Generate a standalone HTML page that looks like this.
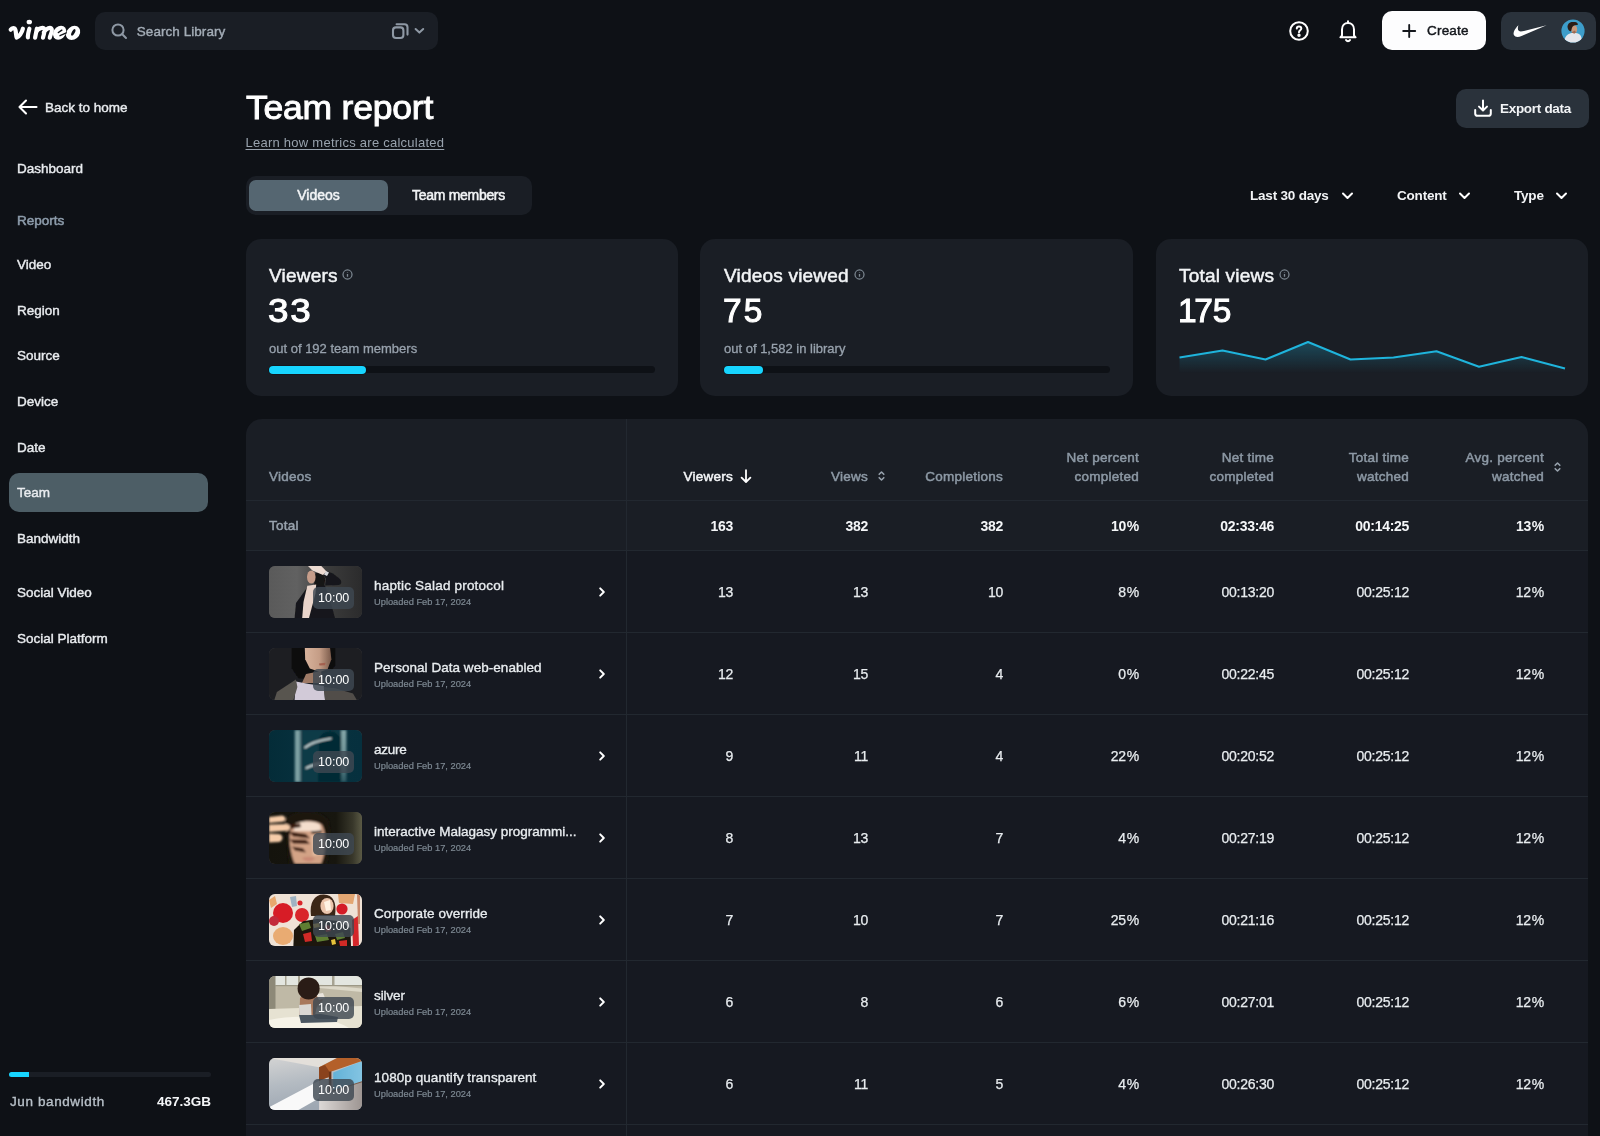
<!DOCTYPE html>
<html><head><meta charset="utf-8">
<style>
*{box-sizing:border-box;margin:0;padding:0}
html,body{width:1600px;height:1136px;overflow:hidden;background:#0e1116;font-family:"Liberation Sans",sans-serif;color:#eef1f4;-webkit-font-smoothing:antialiased}
.abs{position:absolute}
.med{font-weight:normal!important;-webkit-text-stroke:0.45px currentColor}
.sb{font-weight:normal!important;-webkit-text-stroke:0.6px currentColor}
.t{position:absolute;white-space:nowrap;line-height:1}
#search{left:95px;top:11.6px;width:342.8px;height:38.3px;border-radius:10px;background:#1a1e25}
#create{left:1382px;top:11px;width:104px;height:39px;border-radius:10px;background:#fdfdfe}
#acct{left:1501px;top:12px;width:95px;height:38px;border-radius:10px;background:#2a323b}
.nav{left:17px;font-size:13.5px;color:#e9ecef;-webkit-text-stroke:0.4px currentColor}
#teampill{left:9px;top:473px;width:198.6px;height:39px;border-radius:10px;background:#4d5e66}
#tabs{left:245.6px;top:176px;width:286.6px;height:39px;border-radius:10px;background:#1a1e25}
#tabact{left:249px;top:179.8px;width:139px;height:31.4px;border-radius:7px;background:#556671}
#export{left:1456px;top:89.2px;width:132.6px;height:38.7px;border-radius:10px;background:#2a323b}
.card{top:238.7px;width:432.6px;height:157.6px;border-radius:15px;background:#1a1e25}
.ctitle{font-size:19px;color:#f2f4f6;top:265.5px;letter-spacing:0.2px;-webkit-text-stroke:0.5px #f2f4f6}
.cnum{font-size:33.5px;color:#fff;top:294px;letter-spacing:2.5px;-webkit-text-stroke:1px #fff}
.csub{font-size:13px;color:#98a2ad;top:342px;-webkit-text-stroke:0.3px #98a2ad}
.track{top:366px;width:386px;height:7px;border-radius:4px;background:#0e1116}
.fill{top:365.5px;height:8px;border-radius:4px;background:#17d5ff;box-shadow:0 0 0 0.6px #0e1116}
#table{left:245.6px;top:418.8px;width:1342.9px;height:730px;border-radius:16px;background:#1a1e25}
.hl{left:245.6px;width:1342.9px;height:1px;background:#222830}
.th{font-size:13.5px;color:#8d99a5;text-align:right;letter-spacing:0.25px;-webkit-text-stroke:0.5px currentColor}
.num{font-size:14px;color:#e8ecef;text-align:right;letter-spacing:-0.25px;-webkit-text-stroke:0.25px #e8ecef;margin-top:-1px}
.tot{font-size:14px;color:#f4f6f8;font-weight:bold;text-align:right;letter-spacing:-0.3px;margin-top:0.3px}
.thumb{left:269px;width:93px;height:52px;border-radius:6px;overflow:hidden;background:#444}
.badge{left:313px;width:41px;height:22px;border-radius:5px;background:rgba(62,72,82,.82)}
.dur{font-size:12.5px;color:#fff;left:318px}
.vt{left:374px;font-size:13.5px;color:#e8ecef;-webkit-text-stroke:0.35px #e8ecef}
.vs{left:374px;font-size:9.3px;color:#7d8892;-webkit-text-stroke:0.2px #7d8892}
</style></head><body><div id="root" style="position:absolute;left:0;top:0;width:1600px;height:1136px;will-change:transform;overflow:hidden">
<!-- TOPBAR -->
<svg class="abs" style="left:0px;top:10px" width="100" height="40" viewBox="0 10 100 40"><g fill="none" stroke="#fff" stroke-width="4.2" stroke-linecap="round" stroke-linejoin="round">
<path d="M10.7 29.7 C12 27.7 14.6 27.5 15.4 29.9 C16.2 32.6 15.9 36 16.7 37.6 C18.6 37 22.2 32.6 22.9 28.7"/>
<path d="M29.4 28.7 C28.6 31.6 27.6 35 27.9 37.3"/>
<path d="M36.9 28.7 L35.1 37.6 M36 32.5 C38 28 43.5 26.7 44.6 29.5 C45.2 31.4 43.6 34.6 43 37.6 M43.8 32.5 C46 28 50.8 26.7 51.8 29.5 C52.4 31.4 50.4 34.8 49.8 37.6"/>
</g>
<ellipse cx="29.3" cy="22" rx="2.7" ry="2.35" fill="#fff"/>
<g transform="translate(59.6 32.8) skewX(-12)"><ellipse rx="6.5" ry="7" fill="#fff"/></g>
<g transform="translate(73.1 32.9) skewX(-12)"><ellipse rx="7" ry="7.1" fill="#fff"/></g>
<path d="M58.4 32.5 L61.8 30.2" stroke="#0e1116" stroke-width="1.5" stroke-linecap="round"/>
<path d="M60 35.7 L66.3 32.8" stroke="#0e1116" stroke-width="1.3" stroke-linecap="round"/>
<ellipse cx="73.3" cy="32.4" rx="1.5" ry="3.6" transform="rotate(28 73.3 32.4)" fill="#0e1116"/>
</svg>
<div id="search" class="abs"></div>
<svg class="abs" style="left:110px;top:22px" width="18" height="18" viewBox="0 0 18 18" fill="none" stroke="#8e98a4" stroke-width="2" stroke-linecap="round"><circle cx="8" cy="8" r="5.6"/><path d="M12.3 12.3 L16 16"/></svg>
<div class="t" style="left:136.8px;top:24.5px;font-size:13.5px;color:#a4adb7;-webkit-text-stroke:0.4px #a4adb7;letter-spacing:0.05px">Search Library</div>
<svg class="abs" style="left:388px;top:20px" width="40" height="22" viewBox="388 20 40 22" fill="none" stroke="#8e98a4" stroke-width="2.1" stroke-linecap="round" stroke-linejoin="round"><rect x="393" y="27.4" width="10.4" height="10.6" rx="3"/><path d="M396.6 24.2 H404.4 C406.4 24.2 407.5 25.3 407.5 27.3 V34.6"/><path d="M415.6 29 L419.4 32.6 L423.2 29" stroke-width="2"/></svg>
<svg class="abs" style="left:1288px;top:20px" width="22" height="22" viewBox="0 0 22 22" fill="none" stroke="#fff" stroke-width="2" stroke-linecap="round" stroke-linejoin="round"><circle cx="11" cy="11" r="8.8"/><path d="M8.8 8.6 C8.8 7.2 9.8 6.4 11 6.4 C12.3 6.4 13.3 7.3 13.3 8.5 C13.3 10.2 11 10.4 11 12.2"/><circle cx="11" cy="15.2" r="0.7" fill="#fff"/></svg>
<svg class="abs" style="left:1338px;top:19px" width="20" height="24" viewBox="0 0 20 24" fill="none" stroke="#fff" stroke-width="2" stroke-linecap="round" stroke-linejoin="round"><path d="M4 16.5 V10.5 C4 6.6 6.6 4 10 4 C13.4 4 16 6.6 16 10.5 V16.5 L17.6 18.3 H2.4 Z"/><path d="M8 21 C8.6 22 9.2 22.3 10 22.3 C10.8 22.3 11.4 22 12 21"/><path d="M10 2.3 V4"/></svg>
<div id="create" class="abs"></div>
<svg class="abs" style="left:1401px;top:23px" width="16" height="16" viewBox="0 0 16 16" fill="none" stroke="#14171c" stroke-width="1.9" stroke-linecap="round"><path d="M8.2 2 V14 M2.2 8 H14.2"/></svg>
<div class="t" style="left:1427px;top:24px;font-size:13.5px;color:#14171c;-webkit-text-stroke:0.45px #14171c;letter-spacing:0.2px">Create</div>
<div id="acct" class="abs"></div>
<svg class="abs" style="left:1512px;top:22px" width="36" height="18" viewBox="0 0 36 18"><path d="M34.6 3.2 L9.5 14 C6 15.6 3 15.2 1.9 13 C0.9 10.6 2.8 6.8 6.4 3.2 C5.6 5.6 5.6 7.8 6.8 8.8 C8 9.8 10 9.4 12 8.9 Z" fill="#fff"/></svg>
<svg class="abs" style="left:1561.1px;top:18.8px" width="24" height="24" viewBox="0 0 24 24"><defs><clipPath id="av"><circle cx="12" cy="12" r="11.6"/></clipPath><filter id="avb"><feGaussianBlur stdDeviation="0.35"/></filter></defs><g clip-path="url(#av)"><rect width="24" height="24" fill="#3d9dca"/><g filter="url(#avb)"><path d="M3 24 C3.4 17.5 6.5 15 9.5 14.2 L13 13.6 L17 14.6 C19.5 15.6 21 18 21 24 Z" fill="#e4e6ec"/><ellipse cx="13.2" cy="10.3" rx="2.9" ry="4.1" fill="#c9987c"/><path d="M10.2 13.4 L13.4 14.6 L15 13.6 L14 11.5 Z" fill="#9b6a52"/><path d="M6.6 8.6 C6 4 10 2.4 13 3 C16 3 17.4 4.6 16.6 6 C14 5.6 11.6 6.6 10.8 9.2 C10.4 10.8 10.4 12 9.6 12.4 C7.8 12 6.9 10.4 6.6 8.6 Z" fill="#2a1a14"/></g></g></svg>
<!-- SIDEBAR -->
<div id="teampill" class="abs"></div>
<svg class="abs" style="left:17px;top:98px" width="22" height="18" viewBox="0 0 22 18" fill="none" stroke="#fff" stroke-width="2.1" stroke-linecap="round" stroke-linejoin="round"><path d="M19.5 9 H2.5 M9 2.5 L2.5 9 L9 15.5"/></svg>
<div class="t nav" style="left:45px;top:101px">Back to home</div>
<div class="t nav" style="top:162px">Dashboard</div>
<div class="t nav" style="top:214px;color:#8d9cab;font-size:13.5px;-webkit-text-stroke:0.55px #8d9cab">Reports</div>
<div class="t nav" style="top:258px">Video</div>
<div class="t nav" style="top:304px">Region</div>
<div class="t nav" style="top:349px">Source</div>
<div class="t nav" style="top:395px">Device</div>
<div class="t nav" style="top:441px">Date</div>
<div class="t nav" style="top:486px">Team</div>
<div class="t nav" style="top:532px">Bandwidth</div>
<div class="t nav" style="top:586px">Social Video</div>
<div class="t nav" style="top:632px">Social Platform</div>
<div class="abs" style="left:9px;top:1072px;width:202px;height:5px;border-radius:3px;background:#1a1e25"></div>
<div class="abs" style="left:9px;top:1072px;width:20px;height:5px;border-radius:3px 0 0 3px;background:#17d5ff"></div>
<div class="t" style="left:10px;top:1094.7px;font-size:13.5px;color:#b8c0c8;letter-spacing:0.6px;-webkit-text-stroke:0.35px #b8c0c8">Jun bandwidth</div>
<div class="t" style="left:111px;width:100px;text-align:right;top:1094.7px;font-size:13.5px;color:#f4f6f8;font-weight:bold;letter-spacing:0px">467.3GB</div>
<!-- MAIN -->
<div class="t" id="title" style="left:245.6px;top:92.2px;font-size:32.6px;color:#fff;letter-spacing:-0.2px;-webkit-text-stroke:0.9px #fff;transform:scaleX(1.09);transform-origin:left center">Team report</div>
<div class="t" style="left:245.5px;top:136px;font-size:13px;letter-spacing:0.25px;color:#98a2ad;text-decoration:underline;text-underline-offset:2px">Learn how metrics are calculated</div>
<div id="tabs" class="abs"></div><div id="tabact" class="abs"></div>
<div class="t" style="left:249px;width:139px;text-align:center;top:188px;font-size:14px;color:#f2f4f6;-webkit-text-stroke:0.5px #f2f4f6;letter-spacing:0px">Videos</div>
<div class="t" style="left:388px;width:141px;text-align:center;top:188px;font-size:14px;color:#f2f4f6;-webkit-text-stroke:0.5px #f2f4f6;letter-spacing:-0.3px">Team members</div>
<div id="export" class="abs"></div>
<svg class="abs" style="left:1473px;top:98px" width="20" height="20" viewBox="0 0 20 20" fill="none" stroke="#fff" stroke-width="2" stroke-linecap="round" stroke-linejoin="round"><path d="M10 2.4 V12 M6 8.6 L10 12.4 L14 8.6"/><path d="M2.2 12 V15.4 C2.2 16.9 3.1 17.8 4.6 17.8 H15.4 C16.9 17.8 17.8 16.9 17.8 15.4 V12"/></svg>
<div class="t" style="left:1500px;top:102px;font-size:13.5px;font-weight:bold;color:#f2f4f6;letter-spacing:-0.3px">Export data</div>
<div class="t" style="left:1250px;top:189px;font-size:13.5px;font-weight:bold;color:#f2f4f6;letter-spacing:-0.2px">Last 30 days</div>
<svg class="abs chev" style="left:1341px;top:191px" width="13" height="10" viewBox="0 0 13 10" fill="none" stroke="#fff" stroke-width="2" stroke-linecap="round" stroke-linejoin="round"><path d="M2 2.5 L6.5 7 L11 2.5"/></svg>
<div class="t" style="left:1397px;top:189px;font-size:13.5px;font-weight:bold;color:#f2f4f6;letter-spacing:-0.2px">Content</div>
<svg class="abs chev" style="left:1458px;top:191px" width="13" height="10" viewBox="0 0 13 10" fill="none" stroke="#fff" stroke-width="2" stroke-linecap="round" stroke-linejoin="round"><path d="M2 2.5 L6.5 7 L11 2.5"/></svg>
<div class="t" style="left:1514px;top:189px;font-size:13.5px;font-weight:bold;color:#f2f4f6;letter-spacing:-0.2px">Type</div>
<svg class="abs chev" style="left:1555px;top:191px" width="13" height="10" viewBox="0 0 13 10" fill="none" stroke="#fff" stroke-width="2" stroke-linecap="round" stroke-linejoin="round"><path d="M2 2.5 L6.5 7 L11 2.5"/></svg>
<div class="abs card" style="left:245.6px"></div>
<div class="abs card" style="left:700.4px"></div>
<div class="abs card" style="left:1155.9px"></div>
<div class="t ctitle" style="left:269px">Viewers</div>
<div class="t ctitle" style="left:724px">Videos viewed</div>
<div class="t ctitle" style="left:1179px">Total views</div>
<svg class="abs" style="left:342.4px;top:269.1px" width="11" height="11" viewBox="0 0 11 11" fill="none" stroke="#7d8892" stroke-width="1.25"><circle cx="5.5" cy="5.5" r="4.5"/><path d="M5.5 5 V7.7 M5.5 3.2 V3.8" stroke-width="1.3"/></svg>
<svg class="abs" style="left:854.4px;top:269.1px" width="11" height="11" viewBox="0 0 11 11" fill="none" stroke="#7d8892" stroke-width="1.25"><circle cx="5.5" cy="5.5" r="4.5"/><path d="M5.5 5 V7.7 M5.5 3.2 V3.8" stroke-width="1.3"/></svg>
<svg class="abs" style="left:1279.4px;top:269.1px" width="11" height="11" viewBox="0 0 11 11" fill="none" stroke="#7d8892" stroke-width="1.25"><circle cx="5.5" cy="5.5" r="4.5"/><path d="M5.5 5 V7.7 M5.5 3.2 V3.8" stroke-width="1.3"/></svg>
<div class="t cnum" style="left:268px;letter-spacing:1.5px;transform:scaleX(1.1);transform-origin:left center">33</div>
<div class="t cnum" style="left:723px;letter-spacing:2px">75</div>
<div class="t cnum" style="left:1178px;letter-spacing:0"><span style="margin-right:-2.5px">1</span>75</div>
<div class="t csub" style="left:269px">out of 192 team members</div>
<div class="t csub" style="left:724px">out of 1,582 in library</div>
<div class="abs track" style="left:269px"></div><div class="abs fill" style="left:268.6px;width:97px"></div>
<div class="abs track" style="left:724px"></div><div class="abs fill" style="left:723.6px;width:39.6px"></div>
<svg class="abs" style="left:1156px;top:239px" width="432" height="157" viewBox="1156 239 432 157"><defs><linearGradient id="sg" x1="0" y1="0" x2="0" y2="1"><stop offset="0" stop-color="#1ea6cc" stop-opacity=".32"/><stop offset="1" stop-color="#1ea6cc" stop-opacity="0"/></linearGradient></defs>
<path d="M1179.5 357.5 L1222.5 350.5 L1265.5 359.5 L1308 342 L1350.5 359.5 L1393.5 357.5 L1436.5 351.3 L1479 366.8 L1521.5 357 L1565 368.5 V373 H1179.5 Z" fill="url(#sg)"/>
<path d="M1179.5 357.5 L1222.5 350.5 L1265.5 359.5 L1308 342 L1350.5 359.5 L1393.5 357.5 L1436.5 351.3 L1479 366.8 L1521.5 357 L1565 368.5" fill="none" stroke="#1fb4dc" stroke-width="2" stroke-linejoin="round"/></svg>
<div id="table" class="abs"></div>
<div class="abs" style="left:245.6px;top:550.5px;width:1342.9px;height:600px;background:#161921"></div>
<!-- TABLE -->
<div class="abs hl" style="top:500px"></div>
<div class="abs hl" style="top:550px"></div>
<div class="abs hl" style="top:632px"></div>
<div class="abs hl" style="top:714px"></div>
<div class="abs hl" style="top:796px"></div>
<div class="abs hl" style="top:878px"></div>
<div class="abs hl" style="top:960px"></div>
<div class="abs hl" style="top:1042px"></div>
<div class="abs hl" style="top:1124px"></div>
<div class="abs" style="left:626px;top:419px;width:1px;height:720px;background:#222830"></div>
<div class="t th" style="left:269px;top:470px;text-align:left">Videos</div>
<div class="t th" style="left:573px;width:160px;top:470px;color:#f4f6f8">Viewers</div>
<svg class="abs" style="left:739px;top:468px" width="14" height="16" viewBox="0 0 14 16" fill="none" stroke="#fff" stroke-width="1.8" stroke-linecap="round" stroke-linejoin="round"><path d="M7 2.2 V13.8 M2.6 9.6 L7 14 L11.4 9.6"/></svg>
<div class="t th" style="left:708px;width:160px;top:470px;">Views</div>
<svg class="abs" style="left:877px;top:470px" width="9" height="12" viewBox="0 0 9 12" fill="none" stroke="#98a2ad" stroke-width="1.6" stroke-linecap="round" stroke-linejoin="round"><path d="M2.2 4.3 L4.5 2 L6.8 4.3 M2.2 7.7 L4.5 10 L6.8 7.7"/></svg>
<div class="t th" style="left:843px;width:160px;top:470px;">Completions</div>
<div class="t th" style="left:979px;width:160px;top:451px;">Net percent</div>
<div class="t th" style="left:979px;width:160px;top:470px;">completed</div>
<div class="t th" style="left:1114px;width:160px;top:451px;">Net time</div>
<div class="t th" style="left:1114px;width:160px;top:470px;">completed</div>
<div class="t th" style="left:1249px;width:160px;top:451px;">Total time</div>
<div class="t th" style="left:1249px;width:160px;top:470px;">watched</div>
<div class="t th" style="left:1384px;width:160px;top:451px;">Avg. percent</div>
<div class="t th" style="left:1384px;width:160px;top:470px;">watched</div>
<svg class="abs" style="left:1553px;top:461px" width="9" height="12" viewBox="0 0 9 12" fill="none" stroke="#98a2ad" stroke-width="1.6" stroke-linecap="round" stroke-linejoin="round"><path d="M2.2 4.3 L4.5 2 L6.8 4.3 M2.2 7.7 L4.5 10 L6.8 7.7"/></svg>
<div class="t th" style="left:269px;top:519px;text-align:left;color:#98a2ad">Total</div>
<div class="t tot" style="left:573px;width:160px;top:519px;">163</div>
<div class="t tot" style="left:708px;width:160px;top:519px;">382</div>
<div class="t tot" style="left:843px;width:160px;top:519px;">382</div>
<div class="t tot" style="left:979px;width:160px;top:519px;">10&#8202;%</div>
<div class="t tot" style="left:1114px;width:160px;top:519px;">02:33:46</div>
<div class="t tot" style="left:1249px;width:160px;top:519px;">00:14:25</div>
<div class="t tot" style="left:1384px;width:160px;top:519px;">13&#8202;%</div>
<div class="abs thumb" style="top:566px" id="th0"><svg width="93" height="52" viewBox="0 0 93 52" style="display:block"><defs><filter id="b1_0" x="-10%" y="-10%" width="120%" height="120%"><feGaussianBlur stdDeviation="0.7"/></filter><linearGradient id="g0"><stop offset="0" stop-color="#5a5a5a"/><stop offset=".3" stop-color="#616161"/><stop offset=".62" stop-color="#3c3c3c"/><stop offset="1" stop-color="#2b2b2c"/></linearGradient></defs><rect width="93" height="52" fill="url(#g0)"/>
<g filter="url(#b1_0)">
<path d="M46 8 C50 5 56 8 56 14 L55 22 L45 21 Z" fill="#191313"/>
<path d="M25.6 52 L27 37 L36 24.5 L39 19.7 L49 19.7 L70 19 C73 18 73 15.5 71 13 L64 7.5 L56 4.4 L54 8 L57 13 L56 20 L60 30 L66 52 Z" fill="#17181b"/>
<path d="M38.3 19.7 L47.2 18.5 L46.5 27.3 L40 52 L33.2 52 L34.5 36 Z" fill="#e9d4ca"/>
<ellipse cx="42.3" cy="11" rx="4.3" ry="6.6" fill="#c69d8a"/>
<path d="M39 0 L52.3 0 L57.6 5.4 L54 9 L43.4 4.6 Z" fill="#ecdad1"/>
<path d="M57 5 L60 6.5 L58 10 L55 8.5 Z" fill="#d8d8dc"/>
</g></svg></div>
<div class="abs badge" style="top:587px"></div><div class="t dur" style="top:592px">10:00</div>
<div class="t vt" style="top:579px;letter-spacing:0.19px">haptic Salad protocol</div><div class="t vs" style="top:598px">Uploaded Feb 17, 2024</div>
<svg class="abs" style="left:597px;top:586px" width="10" height="12" viewBox="0 0 10 12" fill="none" stroke="#fff" stroke-width="2" stroke-linecap="round" stroke-linejoin="round"><path d="M3.2 2.4 L6.8 6 L3.2 9.6"/></svg>
<div class="t num" style="left:573px;width:160px;top:586px;">13</div>
<div class="t num" style="left:708px;width:160px;top:586px;">13</div>
<div class="t num" style="left:843px;width:160px;top:586px;">10</div>
<div class="t num" style="left:979px;width:160px;top:586px;">8&#8202;%</div>
<div class="t num" style="left:1114px;width:160px;top:586px;">00:13:20</div>
<div class="t num" style="left:1249px;width:160px;top:586px;">00:25:12</div>
<div class="t num" style="left:1384px;width:160px;top:586px;">12&#8202;%</div>
<div class="abs thumb" style="top:648px" id="th1"><svg width="93" height="52" viewBox="0 0 93 52" style="display:block"><defs><filter id="b1_1" x="-10%" y="-10%" width="120%" height="120%"><feGaussianBlur stdDeviation="0.7"/></filter><linearGradient id="f1"><stop offset="0" stop-color="#d8b39c"/><stop offset=".55" stop-color="#c59d86"/><stop offset="1" stop-color="#7a5a4a"/></linearGradient></defs><rect width="93" height="52" fill="#1d1e22"/>
<g filter="url(#b1_1)">
<path d="M22.4 0 L66.2 0 L66.2 17.5 L62.4 23 L37 30.5 L29.4 30.2 L22.4 20 Z" fill="#0c0c0e"/>
<path d="M37 26 L52 23 L54 35 L33 35 Z" fill="#9f7a66"/>
<path d="M35.8 0 L61.1 0 L62.4 11.2 L58.6 21.3 L51 24 L40.8 20.5 L36.2 11.2 Z" fill="url(#f1)"/>
<path d="M50 15.5 L56.5 14.8 L56 17.2 L50.5 17.4 Z" fill="#a3604f"/>
<path d="M26.9 33.5 L40 36 L54.8 38 L56 52 L25.6 52 Z" fill="#d2cad8"/>
<path d="M5.3 52 L7.9 44 L26.9 31.5 L28.4 39 L24.4 52 Z" fill="#58544f"/>
<path d="M54.8 39 L66.2 40.3 L84 45.4 L87.8 52 L56 52 Z" fill="#514d49"/>
</g></svg></div>
<div class="abs badge" style="top:669px"></div><div class="t dur" style="top:674px">10:00</div>
<div class="t vt" style="top:661px;letter-spacing:0.04px">Personal Data web-enabled</div><div class="t vs" style="top:680px">Uploaded Feb 17, 2024</div>
<svg class="abs" style="left:597px;top:668px" width="10" height="12" viewBox="0 0 10 12" fill="none" stroke="#fff" stroke-width="2" stroke-linecap="round" stroke-linejoin="round"><path d="M3.2 2.4 L6.8 6 L3.2 9.6"/></svg>
<div class="t num" style="left:573px;width:160px;top:668px;">12</div>
<div class="t num" style="left:708px;width:160px;top:668px;">15</div>
<div class="t num" style="left:843px;width:160px;top:668px;">4</div>
<div class="t num" style="left:979px;width:160px;top:668px;">0&#8202;%</div>
<div class="t num" style="left:1114px;width:160px;top:668px;">00:22:45</div>
<div class="t num" style="left:1249px;width:160px;top:668px;">00:25:12</div>
<div class="t num" style="left:1384px;width:160px;top:668px;">12&#8202;%</div>
<div class="abs thumb" style="top:730px" id="th2"><svg width="93" height="52" viewBox="0 0 93 52" style="display:block"><defs><filter id="b1_2" x="-10%" y="-10%" width="120%" height="120%"><feGaussianBlur stdDeviation="0.8"/></filter><linearGradient id="g2"><stop offset="0" stop-color="#042c38"/><stop offset=".5" stop-color="#08323f"/><stop offset="1" stop-color="#06303e"/></linearGradient><linearGradient id="r2" x2="0" y2="1"><stop offset="0" stop-color="#86a8aa"/><stop offset=".6" stop-color="#6a8e92"/><stop offset="1" stop-color="#2a5660"/></linearGradient></defs><rect width="93" height="52" fill="url(#g2)"/>
<g filter="url(#b1_2)">
<rect x="32" y="0" width="41" height="52" fill="#0b3b47"/>
<path d="M49 52 L50 10 C51 2 60 0 66 2 L72 8 L72 52 Z" fill="#062a35"/>
<rect x="25.8" y="0" width="5.6" height="52" fill="#7c9fa2"/>
<rect x="72.2" y="0" width="5.2" height="52" fill="url(#r2)"/>
<path d="M36 17.6 C42 12 52 10 62 8.4" stroke="#dfeaea" stroke-width="1.5" fill="none" stroke-linecap="round"/>
<path d="M37.2 38.2 C41 35.6 46 34.5 51 33.4" stroke="#dfeaea" stroke-width="1.5" fill="none" stroke-linecap="round"/>
</g></svg></div>
<div class="abs badge" style="top:751px"></div><div class="t dur" style="top:756px">10:00</div>
<div class="t vt" style="top:743px;letter-spacing:-0.25px">azure</div><div class="t vs" style="top:762px">Uploaded Feb 17, 2024</div>
<svg class="abs" style="left:597px;top:750px" width="10" height="12" viewBox="0 0 10 12" fill="none" stroke="#fff" stroke-width="2" stroke-linecap="round" stroke-linejoin="round"><path d="M3.2 2.4 L6.8 6 L3.2 9.6"/></svg>
<div class="t num" style="left:573px;width:160px;top:750px;">9</div>
<div class="t num" style="left:708px;width:160px;top:750px;">11</div>
<div class="t num" style="left:843px;width:160px;top:750px;">4</div>
<div class="t num" style="left:979px;width:160px;top:750px;">22&#8202;%</div>
<div class="t num" style="left:1114px;width:160px;top:750px;">00:20:52</div>
<div class="t num" style="left:1249px;width:160px;top:750px;">00:25:12</div>
<div class="t num" style="left:1384px;width:160px;top:750px;">12&#8202;%</div>
<div class="abs thumb" style="top:812px" id="th3"><svg width="93" height="52" viewBox="0 0 93 52" style="display:block"><defs><filter id="b1_3" x="-10%" y="-10%" width="120%" height="120%"><feGaussianBlur stdDeviation="0.8"/></filter><linearGradient id="g3"><stop offset="0" stop-color="#14130d"/><stop offset=".72" stop-color="#17160f"/><stop offset=".9" stop-color="#38372a"/><stop offset="1" stop-color="#5b5a45"/></linearGradient></defs><rect width="93" height="52" fill="url(#g3)"/>
<g filter="url(#b1_3)">
<path d="M16 9 C20 -3 55 -4 60 10 L62 30 L58 52 L20 52 Z" fill="#1b1710"/>
<path d="M22 16 C26 8 48 7 53 13 C57 20 58 38 52 52 L26 52 C21 42 19 24 22 16 Z" fill="#d3a386"/>
<path d="M25 13 C30 8.6 45 8.2 51 12.4 L52 19 L25 19 Z" fill="#f4decd"/>
<path d="M42 23 L54 22 L54 42 L44 44 Z" fill="#e5bca0"/>
<path d="M20 13 L31 11.6 L32 15 L21 17 Z M20 19.6 L37 22 L41 26.4 L24 24.6 Z M21 27.4 L37 27.8 L41 32 L24 31.6 Z M23 34.4 L34 36.2 L37 40.4 L26 38.4 Z" fill="#3a1b10"/>
<path d="M42 19.2 L53 18.4 L53 21 L43 21.8 Z" fill="#2a1a12"/>
<path d="M33 46 C37 44.4 42 44.4 46 46 C44 50.4 36 50.8 33 46 Z" fill="#c98a76"/>
<path d="M0 5 L13 3.6 C17.4 4.2 17.4 8.8 14 9.8 L0 11 Z M0 12.6 L17 12 C22.4 12.6 22.4 17.8 18 18.8 L0 20 Z M0 21.6 L10 22 C15 23 14.4 29 10 30 L0 30.6 Z" fill="#f6cca9"/>
</g></svg></div>
<div class="abs badge" style="top:833px"></div><div class="t dur" style="top:838px">10:00</div>
<div class="t vt" style="top:825px;letter-spacing:0.0px">interactive Malagasy programmi...</div><div class="t vs" style="top:844px">Uploaded Feb 17, 2024</div>
<svg class="abs" style="left:597px;top:832px" width="10" height="12" viewBox="0 0 10 12" fill="none" stroke="#fff" stroke-width="2" stroke-linecap="round" stroke-linejoin="round"><path d="M3.2 2.4 L6.8 6 L3.2 9.6"/></svg>
<div class="t num" style="left:573px;width:160px;top:832px;">8</div>
<div class="t num" style="left:708px;width:160px;top:832px;">13</div>
<div class="t num" style="left:843px;width:160px;top:832px;">7</div>
<div class="t num" style="left:979px;width:160px;top:832px;">4&#8202;%</div>
<div class="t num" style="left:1114px;width:160px;top:832px;">00:27:19</div>
<div class="t num" style="left:1249px;width:160px;top:832px;">00:25:12</div>
<div class="t num" style="left:1384px;width:160px;top:832px;">12&#8202;%</div>
<div class="abs thumb" style="top:894px" id="th4"><svg width="93" height="52" viewBox="0 0 93 52" style="display:block"><defs><filter id="b1_4" x="-10%" y="-10%" width="120%" height="120%"><feGaussianBlur stdDeviation="0.7"/></filter></defs><rect width="93" height="52" fill="#efe2d6"/>
<g filter="url(#b1_4)">
<path d="M69 0 L86 0 L84 10 L70 9 Z" fill="#e3a672"/>
<path d="M0 6 L6 2 L8 10 L2 14 Z" fill="#e8a86e"/>
<circle cx="14" cy="19" r="10" fill="#d71e26"/><circle cx="5" cy="27" r="5" fill="#c22a3a"/>
<circle cx="33" cy="21" r="7" fill="#d9262b"/><circle cx="31" cy="9" r="2.5" fill="#d9262b"/>
<path d="M21 3 L27 2 L28 12 L23 13 Z" fill="#9fb3c2"/>
<circle cx="73" cy="15" r="5.6" fill="#d41f27"/>
<path d="M83 26 L89 22 L90 52 L84 52 Z" fill="#d5252c"/>
<path d="M88 0 L91 0 L91 30 L89 30 Z" fill="#c9886a"/>
<ellipse cx="14" cy="42" rx="10" ry="9" fill="#e9ab72"/>
<path d="M42 22 C40 8 46 0 55 0.5 C64 1 68 8 66 22 Z" fill="#3b2518"/>
<ellipse cx="58" cy="12" rx="6.6" ry="8" fill="#ecc6ad"/>
<path d="M55 8 L61 6 L62 16 L57 17 Z" fill="#fff3e4"/>
<path d="M24.4 52 L25 36 L34 27.3 L48 25 L70 27 L81.4 34 L82 52 Z" fill="#1a130f"/>
<path d="M30 30 L40 28 L42 34 L33 37 Z M46 42 L58 40 L60 46 L48 48 Z M66 40 L74 38 L76 44 L68 46 Z" fill="#5e7e30"/>
<path d="M34 40 L42 38 L43 47 L36 48 Z M56 32 L60 31 L62 37 L57 38 Z M70 47 L78 46 L78 52 L71 52 Z" fill="#d02a26"/>
<path d="M44 30 L50 29 L51 33 L45 34 Z M62 46 L66 45 L67 50 L63 51 Z" fill="#e6c23a"/>
</g></svg></div>
<div class="abs badge" style="top:915px"></div><div class="t dur" style="top:920px">10:00</div>
<div class="t vt" style="top:907px;letter-spacing:0.06px">Corporate override</div><div class="t vs" style="top:926px">Uploaded Feb 17, 2024</div>
<svg class="abs" style="left:597px;top:914px" width="10" height="12" viewBox="0 0 10 12" fill="none" stroke="#fff" stroke-width="2" stroke-linecap="round" stroke-linejoin="round"><path d="M3.2 2.4 L6.8 6 L3.2 9.6"/></svg>
<div class="t num" style="left:573px;width:160px;top:914px;">7</div>
<div class="t num" style="left:708px;width:160px;top:914px;">10</div>
<div class="t num" style="left:843px;width:160px;top:914px;">7</div>
<div class="t num" style="left:979px;width:160px;top:914px;">25&#8202;%</div>
<div class="t num" style="left:1114px;width:160px;top:914px;">00:21:16</div>
<div class="t num" style="left:1249px;width:160px;top:914px;">00:25:12</div>
<div class="t num" style="left:1384px;width:160px;top:914px;">12&#8202;%</div>
<div class="abs thumb" style="top:976px" id="th5"><svg width="93" height="52" viewBox="0 0 93 52" style="display:block"><defs><filter id="b1_5" x="-10%" y="-10%" width="120%" height="120%"><feGaussianBlur stdDeviation="0.7"/></filter></defs><rect width="93" height="52" fill="#bfb9a6"/>
<g filter="url(#b1_5)">
<rect x="6" y="0" width="87" height="9" fill="#e3e6e0"/>
<rect x="0" y="0" width="6.5" height="34" fill="#8d8978"/>
<path d="M16 0 H17.5 V9 H16 Z M29 0 H31 V9 H29 Z M63 0 H65.5 V9 H63 Z" fill="#a7a392"/>
<path d="M50 8.5 L93 12.5 L93 16 L50 12 Z" fill="#dcd8c8"/>
<rect x="6" y="9" width="87" height="1.2" fill="#9c9886"/>
<path d="M0 33 L93 30 L93 52 L0 52 Z" fill="#e6e2d2"/>
<path d="M0 44 C30 38 60 40 80 52 L0 52 Z" fill="#f6f3e8"/>
<path d="M30 39 L52 38 L69 41 L68 46 L32 47 Z" fill="#4b5661"/>
<path d="M31 22 C34 18 44 17 50 20 L54 24 L48 30 L46 39 L30.5 39 Z" fill="#a8785b"/>
<path d="M30 29 L42 28 L42.5 39 L30.5 39 Z" fill="#dad7d3"/>
<path d="M47 18 L54 17 L56 22 L50 24 Z" fill="#e9e4dc"/>
<circle cx="39.6" cy="12.4" r="11" fill="#2a1c14"/>
</g></svg></div>
<div class="abs badge" style="top:997px"></div><div class="t dur" style="top:1002px">10:00</div>
<div class="t vt" style="top:989px;letter-spacing:-0.1px">silver</div><div class="t vs" style="top:1008px">Uploaded Feb 17, 2024</div>
<svg class="abs" style="left:597px;top:996px" width="10" height="12" viewBox="0 0 10 12" fill="none" stroke="#fff" stroke-width="2" stroke-linecap="round" stroke-linejoin="round"><path d="M3.2 2.4 L6.8 6 L3.2 9.6"/></svg>
<div class="t num" style="left:573px;width:160px;top:996px;">6</div>
<div class="t num" style="left:708px;width:160px;top:996px;">8</div>
<div class="t num" style="left:843px;width:160px;top:996px;">6</div>
<div class="t num" style="left:979px;width:160px;top:996px;">6&#8202;%</div>
<div class="t num" style="left:1114px;width:160px;top:996px;">00:27:01</div>
<div class="t num" style="left:1249px;width:160px;top:996px;">00:25:12</div>
<div class="t num" style="left:1384px;width:160px;top:996px;">12&#8202;%</div>
<div class="abs thumb" style="top:1058px" id="th6"><svg width="93" height="52" viewBox="0 0 93 52" style="display:block"><defs><filter id="b1_6" x="-10%" y="-10%" width="120%" height="120%"><feGaussianBlur stdDeviation="0.7"/></filter><linearGradient id="g6" x2="0.3" y2="1"><stop offset="0" stop-color="#d3d3d3"/><stop offset=".5" stop-color="#b4bbc2"/><stop offset="1" stop-color="#9ea7b2"/></linearGradient><linearGradient id="w6"><stop offset="0" stop-color="#dcd8d6"/><stop offset="1" stop-color="#9d9592"/></linearGradient><linearGradient id="s6"><stop offset="0" stop-color="#63b2d8"/><stop offset="1" stop-color="#83c4e2"/></linearGradient></defs><rect width="93" height="52" fill="url(#g6)"/>
<g filter="url(#b1_6)">
<path d="M0 0 L67.9 0 L50.1 9.2 Z" fill="#e3dfda"/>
<rect x="50.1" y="20" width="43" height="32" fill="url(#w6)"/>
<path d="M64.2 14.4 L93 2.9 L93 23.5 L64.2 32.3 Z" fill="url(#s6)"/>
<path d="M67.9 0 L93 0 L93 3 L62.4 13.6 L60 19 L50.1 22.8 L50.1 9.2 Z" fill="#b4612a"/>
<path d="M50.1 9.2 L56 7 L60 13 L59.6 19 L50.1 22.8 Z" fill="#8a431c"/>
<rect x="59.8" y="13.5" width="2.6" height="20" fill="#673117"/>
<path d="M62.4 33 L93 23.3 L93 24.3 L62.4 34 Z" fill="#7a5a48"/>
<path d="M0 49.2 L43.5 26.3 L50.1 22.8 L50.1 40.3 L29.4 52 L2.8 52 Z" fill="#f9f9f9"/>
</g></svg></div>
<div class="abs badge" style="top:1079px"></div><div class="t dur" style="top:1084px">10:00</div>
<div class="t vt" style="top:1071px;letter-spacing:0.07px">1080p quantify transparent</div><div class="t vs" style="top:1090px">Uploaded Feb 17, 2024</div>
<svg class="abs" style="left:597px;top:1078px" width="10" height="12" viewBox="0 0 10 12" fill="none" stroke="#fff" stroke-width="2" stroke-linecap="round" stroke-linejoin="round"><path d="M3.2 2.4 L6.8 6 L3.2 9.6"/></svg>
<div class="t num" style="left:573px;width:160px;top:1078px;">6</div>
<div class="t num" style="left:708px;width:160px;top:1078px;">11</div>
<div class="t num" style="left:843px;width:160px;top:1078px;">5</div>
<div class="t num" style="left:979px;width:160px;top:1078px;">4&#8202;%</div>
<div class="t num" style="left:1114px;width:160px;top:1078px;">00:26:30</div>
<div class="t num" style="left:1249px;width:160px;top:1078px;">00:25:12</div>
<div class="t num" style="left:1384px;width:160px;top:1078px;">12&#8202;%</div>
</div></body></html>
